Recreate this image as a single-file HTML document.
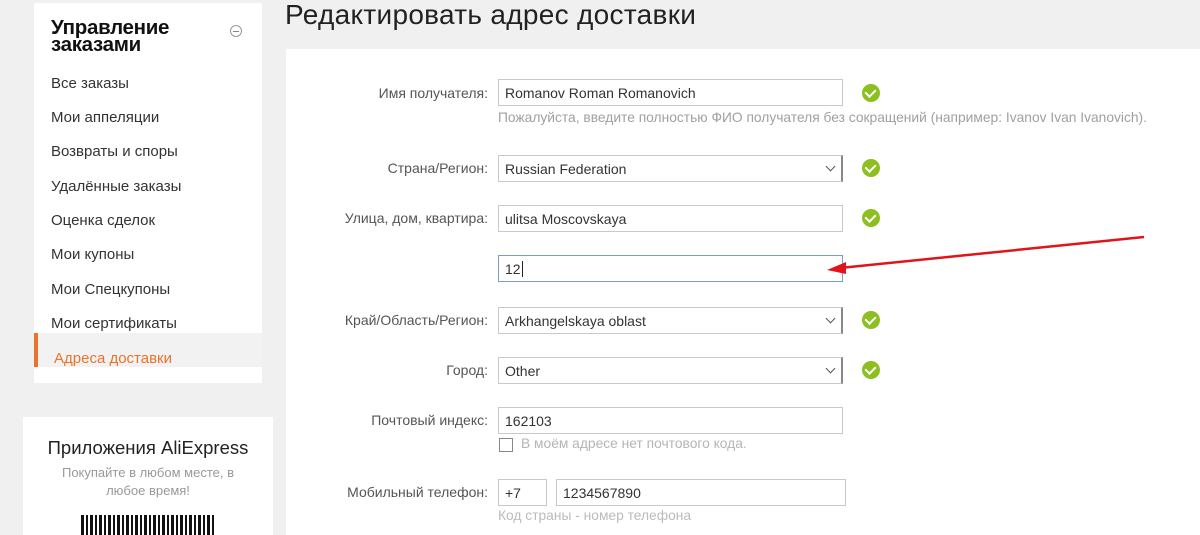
<!DOCTYPE html>
<html><head><meta charset="utf-8"><style>
*{margin:0;padding:0;box-sizing:border-box}
html,body{width:1200px;height:535px;overflow:hidden}
body{background:#f0f0f0;font-family:"Liberation Sans","DejaVu Sans",sans-serif;position:relative;color:#333}
.a{position:absolute}
.side{left:34px;top:3px;width:228px;height:380px;background:#fff}
.side h2{position:absolute;left:17px;top:16px;font-size:20.5px;line-height:17px;font-weight:bold;color:#111;letter-spacing:-0.3px}
.mi{position:absolute;left:17px;font-size:15px;color:#333}
.act{left:0;top:330px;width:228px;height:34px;background:#f2f2f2;border-left:4px solid #e8742b}
.lab{position:absolute;right:712px;font-size:14px;color:#555;text-align:right;white-space:nowrap}
.inp{position:absolute;left:498px;width:345px;height:27px;border:1px solid #c9c9c9;background:#fff;font-size:14px;color:#333;padding:5px 6px;white-space:nowrap}
.sel::after{content:"";position:absolute;right:7px;top:7px;width:6px;height:6px;border-right:1.3px solid #555;border-bottom:1.3px solid #555;transform:rotate(45deg)}
.sel{border-right:2px solid #888}
.chk{position:absolute;left:862px;width:18px;height:18px;border-radius:50%;background:#8cbf1f}
.chk::after{content:"";position:absolute;left:5px;top:3px;width:5px;height:8px;border-right:2.5px solid #fff;border-bottom:2.5px solid #fff;transform:rotate(45deg)}
.hint{position:absolute;left:498px;font-size:13.8px;color:#a0a0a0;white-space:nowrap}
</style></head><body>
<div class="a side">
<h2>Управление<br>заказами</h2>
<div class="a" style="left:196px;top:22px;width:12px;height:12px;border:1px solid #999;border-radius:50%"><div class="a" style="left:2px;top:5px;width:6px;height:1px;background:#888"></div></div>
<div class="mi" style="top:72px">Все заказы</div>
<div class="mi" style="top:106px">Мои аппеляции</div>
<div class="mi" style="top:140px">Возвраты и споры</div>
<div class="mi" style="top:175px">Удалённые заказы</div>
<div class="mi" style="top:209px">Оценка сделок</div>
<div class="mi" style="top:243px">Мои купоны</div>
<div class="mi" style="top:278px">Мои Спецкупоны</div>
<div class="mi" style="top:312px">Мои сертификаты</div>
<div class="a act"></div>
<div class="mi" style="top:347px;left:20px;color:#e8742b">Адреса доставки</div>
</div>
<div class="a" style="left:23px;top:417px;width:250px;height:118px;background:#fff;text-align:center;overflow:hidden">
<div style="margin-top:20px;font-size:18.5px;color:#222">Приложения AliExpress</div>
<div style="margin-top:5px;font-size:13px;color:#999;line-height:18px">Покупайте в любом месте, в<br>любое время!</div>
<div class="a" style="left:58px;top:98px;width:134px;height:20px;background:repeating-linear-gradient(90deg,#111 0 3px,#fff 3px 5px,#111 5px 7px,#fff 7px 9px)"></div>
</div>
<div class="a" style="left:285px;top:-1px;font-size:28px;color:#222;letter-spacing:0.3px">Редактировать адрес доставки</div>
<div class="a" style="left:286px;top:49px;width:914px;height:486px;background:#fff"></div>

<div class="lab" style="top:85px">Имя получателя:</div>
<div class="inp" style="top:79px">Romanov Roman Romanovich</div><div class="chk" style="top:84px"></div>
<div class="hint" style="top:110px">Пожалуйста, введите полностью ФИО получателя без сокращений (например: Ivanov Ivan Ivanovich).</div>

<div class="lab" style="top:160px">Страна/Регион:</div>
<div class="inp sel" style="top:155px">Russian Federation</div><div class="chk" style="top:159px"></div>

<div class="lab" style="top:210px">Улица, дом, квартира:</div>
<div class="inp" style="top:205px">ulitsa Moscovskaya</div><div class="chk" style="top:209px"></div>

<div class="inp" style="top:255px;border-color:#7a9cc6">12<span style="border-left:1px solid #222;margin-left:1px"></span></div>

<div class="lab" style="top:312px">Край/Область/Регион:</div>
<div class="inp sel" style="top:307px">Arkhangelskaya oblast</div><div class="chk" style="top:311px"></div>

<div class="lab" style="top:362px">Город:</div>
<div class="inp sel" style="top:357px">Other</div><div class="chk" style="top:361px"></div>

<div class="lab" style="top:412px">Почтовый индекс:</div>
<div class="inp" style="top:407px">162103</div>
<div class="a" style="left:499px;top:438px;width:14px;height:14px;border:1px solid #888"></div>
<div class="hint" style="left:521px;top:436px;color:#b5b5b5">В моём адресе нет почтового кода.</div>

<div class="lab" style="top:484px">Мобильный телефон:</div>
<div class="inp" style="top:479px;width:49px">+7</div>
<div class="inp" style="top:479px;left:556px;width:290px">1234567890</div>
<div class="hint" style="top:508px;color:#bbb">Код страны - номер телефона</div>

<svg class="a" style="left:0;top:0" width="1200" height="535"><line x1="1144" y1="237" x2="840" y2="268" stroke="#e0141b" stroke-width="2.5"/><polygon points="827,270 846,262 846,274" fill="#e0141b"/></svg>
</body></html>
